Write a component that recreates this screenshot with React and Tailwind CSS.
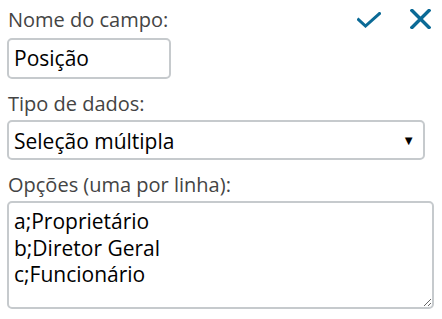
import React from "react";

const font = { fontFamily: '"Open Sans", "Liberation Sans", sans-serif' };

function CheckIcon() {
  return (
    <svg width="24" height="16" viewBox="0 0 24 16" fill="none">
      <path d="M1.5 7.5 L8.5 14 L22.5 1.5" stroke="#0b6a96" strokeWidth="3" strokeLinecap="square" />
    </svg>
  );
}

function XIcon() {
  return (
    <svg width="21" height="20" viewBox="0 0 21 20" fill="none">
      <path d="M2 1.5 L19 18.5 M19 1.5 L2 18.5" stroke="#0b6a96" strokeWidth="3.4" strokeLinecap="square" />
    </svg>
  );
}

export default function App() {
  return (
    <div className="w-[442px] h-[319px] bg-white pt-[6px] pl-[7px] pr-[8px] text-[20px] text-[#444]" style={font}>
      {/* Nome do campo */}
      <div className="flex items-start justify-between h-[27px]">
        <label className="leading-[27px] pl-[1px]">Nome do campo:</label>
        <div className="flex items-start gap-[29px] pr-[3px]">
          <button className="mt-[6px] -ml-[1px] flex"><CheckIcon /></button>
          <button className="mt-[3px] flex"><XIcon /></button>
        </div>
      </div>
      <div className="mt-[5px] w-[164px] h-[41px] border-2 border-[#c6cacd] rounded-[5px] px-[5px] pt-[5px] text-[21px] leading-[27px] text-black">
        Posição
      </div>

      {/* Tipo de dados */}
      <label className="block mt-[11px] leading-[27px] pl-[1px]">Tipo de dados:</label>
      <div className="mt-[3px] w-[418px] h-[40px] border-2 border-[#c6cacd] rounded-[5px] pl-[5px] pr-[8px] flex items-start justify-between text-black">
        <span className="pt-[6px] text-[21px] leading-[27px]">Seleção múltipla</span>
        <span className="mt-[12px] text-[13px] leading-none">▼</span>
      </div>

      {/* Opções */}
      <label className="block mt-[11px] leading-[27px] pl-[1px]">Opções (uma por linha):</label>
      <textarea
        className="block mt-[3px] w-[427px] h-[108px] border-2 border-[#c6cacd] rounded-[5px] px-[5px] pt-[5px] pb-[4px] text-[21px] leading-[26.5px] text-black outline-none resize-y"
        defaultValue={"a;Proprietário\nb;Diretor Geral\nc;Funcionário"}
      />
    </div>
  );
}
